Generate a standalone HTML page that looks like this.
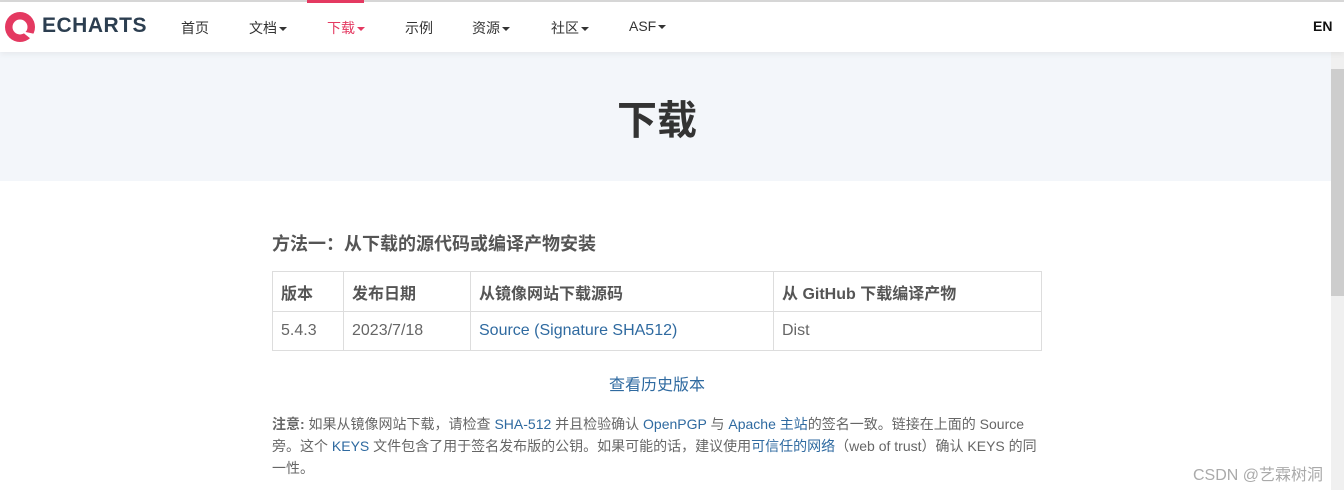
<!DOCTYPE html>
<html><head><meta charset="utf-8"><style>
*{margin:0;padding:0;box-sizing:border-box}
body{width:1344px;height:490px;overflow:hidden;background:#fff;font-family:"Liberation Sans","Noto Sans CJK SC",sans-serif;position:relative;color:#555}
.top{position:absolute;left:0;top:0;width:1344px;height:2px;background:#d8d8d8}
.nav{position:absolute;top:2px;left:0;width:1344px;height:50px;background:#fff;box-shadow:0 2px 6px rgba(0,0,0,.06);z-index:2}
.nav a{position:absolute;top:16px;font-size:14px;color:#333;text-decoration:none}
.nav .act{color:#e43961}
.bar{position:absolute;left:307px;top:0;width:57px;height:3px;background:#e43961;z-index:3}
.caret{display:inline-block;border-left:4px solid transparent;border-right:4px solid transparent;border-top:4px solid currentColor;margin-left:2px;vertical-align:middle}
.hero{position:absolute;top:52px;left:0;width:1331px;height:129px;background:#f3f6fa}
.hero h1{position:absolute;left:0;width:1314px;text-align:center;top:36px;font-size:40px;color:#333;font-weight:bold}
.sb{position:absolute;left:1331px;top:52px;width:13px;height:438px;background:#f0f0f0}
.thumb{position:absolute;left:1331px;top:69px;width:13px;height:227px;background:#cdcdcd}
h2{position:absolute;left:272px;top:230px;font-size:18px;color:#555;font-weight:bold}
table{position:absolute;left:272px;top:271px;width:770px;border-collapse:collapse;font-size:16px}
td,th{border:1px solid #ddd;padding:0 8px;text-align:left;color:#555}
th{height:40px;font-weight:bold}
td{height:39px;color:#666}
a.l{color:#2f6aa0;text-decoration:none}
.hist{position:absolute;left:0;width:1314px;text-align:center;top:371px;font-size:16px;color:#2f6aa0}
.note{position:absolute;left:272px;top:413px;width:780px;font-size:14px;line-height:22px;color:#666;white-space:nowrap}
.csdn{position:absolute;left:1193px;top:461px;font-size:16px;color:#aaa}
</style></head><body>
<div class="top"></div>
<div class="nav">
<svg style="position:absolute;left:4px;top:8px" width="34" height="34" viewBox="0 0 34 34"><circle cx="16" cy="17" r="15" fill="#e43961"/><circle cx="16" cy="17" r="7.5" fill="#fff"/><path d="M17 21 L27 29 L31 24 Z" fill="#fff"/></svg>
<div style="position:absolute;left:42px;top:12px;font-size:21px;font-weight:bold;color:#2c3e50;letter-spacing:0.5px">ECHARTS</div>
<a style="left:181px">首页</a>
<a style="left:249px">文档<span class="caret"></span></a>
<a class="act" style="left:327px">下载<span class="caret"></span></a>
<a style="left:405px">示例</a>
<a style="left:472px">资源<span class="caret"></span></a>
<a style="left:551px">社区<span class="caret"></span></a>
<a style="left:629px">ASF<span class="caret"></span></a>
<a style="left:1313px;font-weight:bold;color:#111">EN</a>
</div>
<div class="bar"></div>
<div class="hero"><h1>下载</h1></div>
<div class="sb"></div><div class="thumb"></div>
<h2>方法一：从下载的源代码或编译产物安装</h2>
<table>
<tr><th style="width:71px">版本</th><th style="width:127px">发布日期</th><th style="width:303px">从镜像网站下载源码</th><th>从 GitHub 下载编译产物</th></tr>
<tr><td>5.4.3</td><td>2023/7/18</td><td><a class="l">Source (Signature SHA512)</a></td><td>Dist</td></tr>
</table>
<div class="hist">查看历史版本</div>
<div class="note"><b>注意:</b> 如果从镜像网站下载，请检查 <a class="l">SHA-512</a> 并且检验确认 <a class="l">OpenPGP</a> 与 <a class="l">Apache 主站</a>的签名一致。链接在上面的 Source<br>旁。这个 <a class="l">KEYS</a> 文件包含了用于签名发布版的公钥。如果可能的话，建议使用<a class="l">可信任的网络</a>（web of trust）确认 KEYS 的同<br>一性。</div>
<div class="csdn">CSDN @艺霖树洞</div>
</body></html>
